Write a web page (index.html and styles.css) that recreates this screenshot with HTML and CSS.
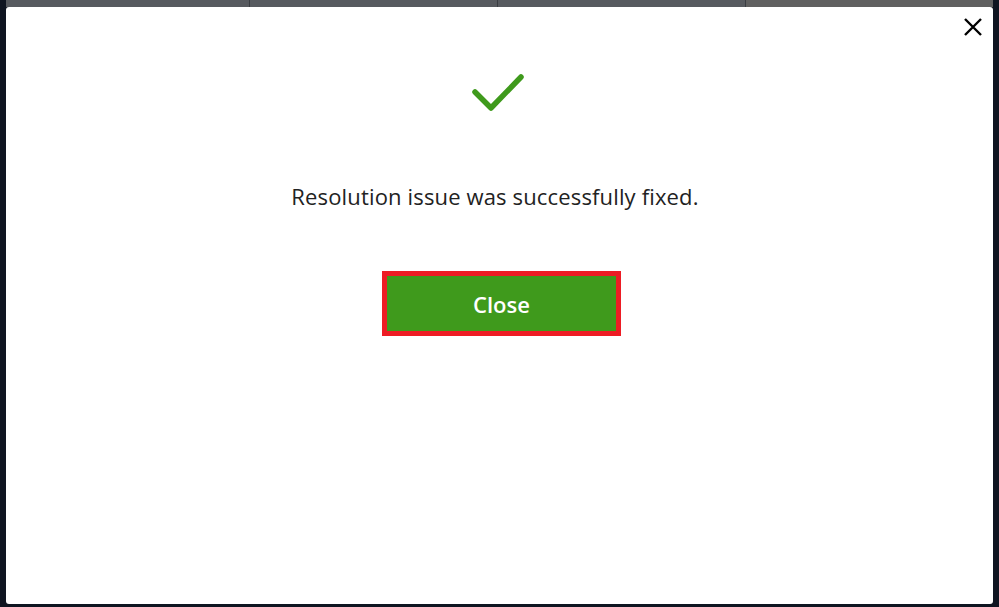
FILE: index.html
```html
<!DOCTYPE html>
<html lang="en">
<head>
    <meta charset="UTF-8">
    <meta name="viewport" content="width=device-width, initial-scale=1.0">
    <title>Resolution fixed</title>
    <link rel="stylesheet" href="styles.css">
</head>
<body>
    <div class="page">
        <div class="tabs">
            <div class="tab"></div>
            <div class="tab"></div>
            <div class="tab"></div>
            <div class="tab tab-last"></div>
        </div>
        <div class="dialog">
            <button class="dialog-close" aria-label="Close">
                <svg width="20" height="20" viewBox="0 0 20 20">
                    <path d="M2 2 L18 18 M18 2 L2 18" stroke="#000" stroke-width="2.4" fill="none"/>
                </svg>
            </button>
            <svg class="check" width="60" height="44" viewBox="0 0 60 44">
                <path d="M5 22 L21 38 L51 7" stroke="#3f9a1c" stroke-width="5.5" stroke-linecap="round" stroke-linejoin="round" fill="none"/>
            </svg>
            <p class="message">Resolution issue was successfully fixed.</p>
            <div class="highlight">
                <button class="close-btn">Close</button>
            </div>
        </div>
    </div>
</body>
</html>
```
FILE: styles.css
```css
:root {
    --green: #3f9a1c;
    --red: #ed1c24;
    --dark: #0f1521;
}

* {
    margin: 0;
    padding: 0;
    box-sizing: border-box;
}

body {
    background: var(--dark);
    font-family: "Open Sans", "Noto Sans", sans-serif;
    color: #222;
}

.page {
    padding: 0 6px 3px 6px;
}

.tabs {
    display: flex;
    height: 7px;
    background: #575a5f;
}

.tab {
    width: 248px;
    border-right: 1px solid #3a3d42;
}

.tab:first-child {
    width: 244px;
}

.tab-last {
    flex: 1;
    border-right: none;
    background: #606060;
}

.dialog {
    position: relative;
    height: 597px;
    background: #fff;
    border-radius: 3px;
    display: flex;
    flex-direction: column;
    align-items: center;
    padding-top: 63px;
}

.dialog-close {
    position: absolute;
    top: 10px;
    right: 10px;
    border: none;
    background: none;
    width: 20px;
    height: 20px;
}

.check {
    display: block;
}

.message {
    margin-top: 67px;
    font-size: 22px;
    line-height: 30px;
    letter-spacing: 0.15px;
    padding-right: 9px;
}

.highlight {
    margin-top: 60px;
    margin-left: 4px;
    border: 5px solid var(--red);
}

.close-btn {
    display: block;
    width: 229px;
    height: 55px;
    border: none;
    background: var(--green);
    color: #fff;
    font-family: "Open Sans", "Noto Sans", sans-serif;
    font-size: 22px;
    font-weight: 600;
}
```
